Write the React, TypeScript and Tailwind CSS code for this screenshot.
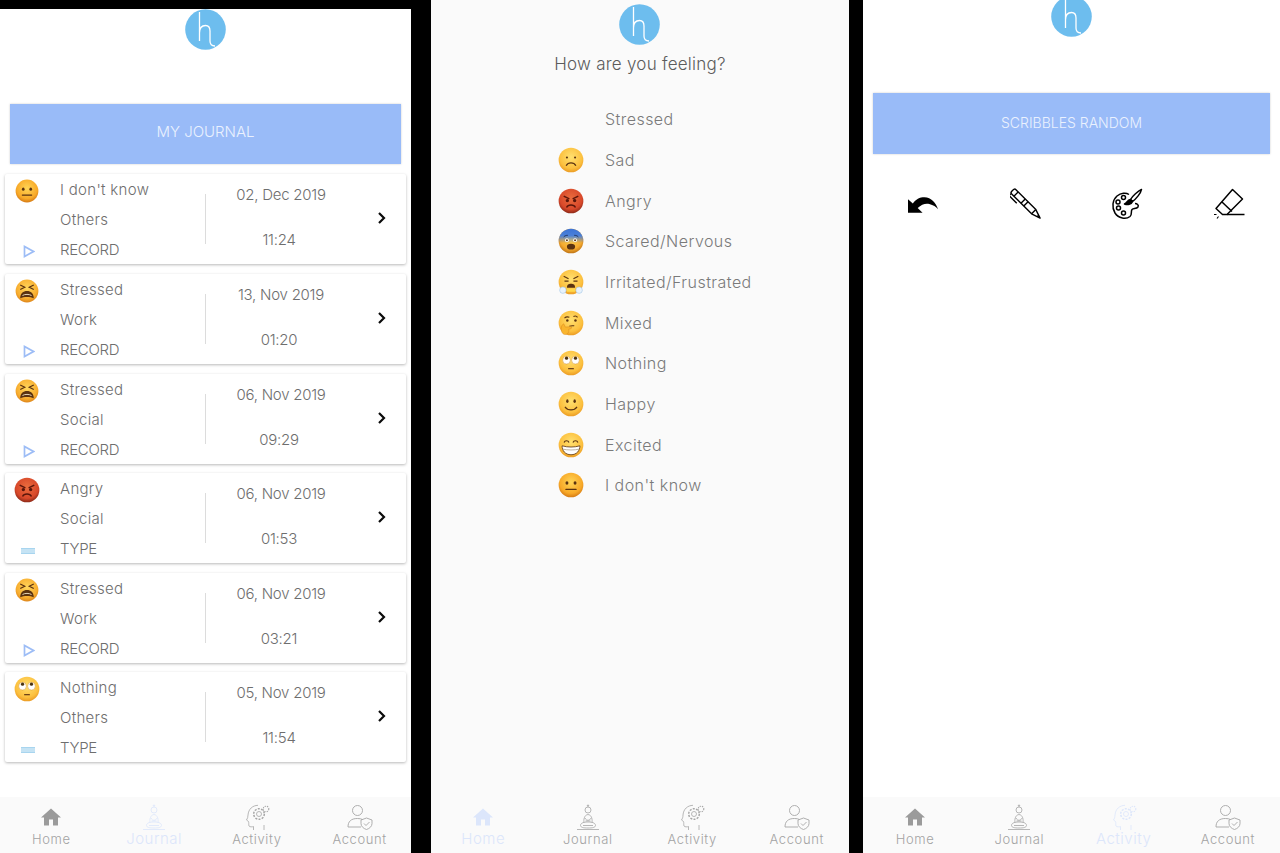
import { useId } from "react";

type Kind = "neutral" | "tired" | "angry" | "roll" | "sad" | "scared" | "steam" | "think" | "smile" | "grin";

function Face({ kind, size = 26 }: { kind: Kind; size?: number }) {
  const id = useId();
  const fills: Record<string, [string, string, string]> = {
    angry: ["#ea6d3e", "#d8482a", "#7e2314"],
    def: ["#ffe070", "#fcc03e", "#e8951f"],
    tired: ["#ffd65c", "#f8ae30", "#d97f16"],
    neutral: ["#ffd556", "#f8a928", "#cf7210"],
    scared: ["#ffd556", "#f4a92f", "#b56a10"],
  };
  const c = fills[kind] ?? fills.def;
  const ink = "#5a3210";
  return (
    <svg width={size} height={size} viewBox="0 0 32 32" className="shrink-0">
      <defs>
        <radialGradient id={id + "g"} cx="50%" cy="38%" r="65%">
          <stop offset="0%" stopColor={c[0]} />
          <stop offset="70%" stopColor={c[1]} />
          <stop offset="100%" stopColor={c[2]} />
        </radialGradient>
        <linearGradient id={id + "b"} x1="0" y1="0" x2="0" y2="1">
          <stop offset="0%" stopColor="#3b73d6" />
          <stop offset="28%" stopColor="#4a80d8" />
          <stop offset="58%" stopColor="#4a80d8" stopOpacity="0" />
        </linearGradient>
      </defs>
      <circle cx="16" cy="16" r="15.2" fill={`url(#${id}g)`} />
      {kind === "scared" && <circle cx="16" cy="16" r="15.2" fill={`url(#${id}b)`} />}
      {kind === "neutral" && (
        <g fill={ink}>
          <ellipse cx="11" cy="13.5" rx="1.8" ry="2.2" />
          <ellipse cx="21" cy="13.5" rx="1.8" ry="2.2" />
          <rect x="9" y="20.5" width="14" height="1.7" rx=".8" />
        </g>
      )}
      {kind === "tired" && (
        <g>
          <path d="M7 8l6 3-6 3M25 8l-6 3 6 3" fill="none" stroke={ink} strokeWidth="1.6" />
          <path d="M7 25.500c0-6.500 4-9.500 9-9.500s9 3 9 9.500c-5-2-13-2-18 0z" fill={ink} />
          <path d="M10 22c3-2 9-2 12 0" stroke="#f4e6c8" strokeWidth="1.2" fill="none" />
        </g>
      )}
      {kind === "angry" && (
        <g fill="none" stroke="#5b160b" strokeWidth="1.8">
          <path d="M7 10l7 3.5M25 10l-7 3.5" />
          <circle cx="11.5" cy="15.5" r="1.2" fill="#5b160b" />
          <circle cx="20.5" cy="15.5" r="1.2" fill="#5b160b" />
          <path d="M10.5 24c2-4 9-4 11 0" />
        </g>
      )}
      {kind === "roll" && (
        <g>
          <circle cx="10.5" cy="12.5" r="4.8" fill="#fff" stroke="#d18b24" strokeWidth=".6" />
          <circle cx="21.5" cy="12.5" r="4.8" fill="#fff" stroke="#d18b24" strokeWidth=".6" />
          <circle cx="10.5" cy="10" r="2" fill="#4a3210" />
          <circle cx="21.5" cy="10" r="2" fill="#4a3210" />
          <path d="M12.5 23h7" stroke={ink} strokeWidth="1.4" />
        </g>
      )}
      {kind === "sad" && (
        <g>
          <circle cx="11" cy="13" r="1.3" fill={ink} />
          <circle cx="21" cy="13" r="1.3" fill={ink} />
          <path d="M10 23c2.500-4.500 9.500-4.500 12 0" stroke={ink} strokeWidth="1.5" fill="none" />
        </g>
      )}
      {kind === "scared" && (
        <g>
          <path d="M7 11c1.500-1.500 3-2 5-2M25 11c-1.500-1.500-3-2-5-2" stroke="#1e2c50" strokeWidth="1.2" fill="none" />
          <circle cx="11" cy="15" r="2.300" fill="#fff" />
          <circle cx="21" cy="15" r="2.300" fill="#fff" />
          <circle cx="11" cy="15" r="1.200" fill={ink} />
          <circle cx="21" cy="15" r="1.200" fill={ink} />
          <ellipse cx="16" cy="23" rx="5" ry="3.500" fill={ink} />
        </g>
      )}
      {kind === "steam" && (
        <g>
          <path d="M7 9l6 3M25 9l-6 3M8 15h5M24 15h-5" stroke={ink} strokeWidth="1.400" fill="none" />
          <path d="M11 23c0-4 2-5 5-5s5 1 5 5z" fill={ink} />
          <circle cx="6" cy="26" r="4" fill="#e8f2fb" stroke="#9fc4e6" strokeWidth=".7" />
          <circle cx="26" cy="26" r="4" fill="#e8f2fb" stroke="#9fc4e6" strokeWidth=".7" />
          <path d="M11 24h10v4H11z" fill="#ffd84a" />
        </g>
      )}
      {kind === "think" && (
        <g>
          <path d="M8 10c1.500-1.500 3.500-2 6-1M19 8c2-1 4-.5 5 1" stroke={ink} strokeWidth="1.400" fill="none" />
          <circle cx="11.500" cy="13" r="1.500" fill={ink} />
          <circle cx="21.500" cy="13" r="1.500" fill={ink} />
          <path d="M14 20c2-.8 4-.8 6-.5" stroke={ink} strokeWidth="1.300" fill="none" />
          <path d="M4 23c0-3 1-5 3-6l2 4 7-.5c1 .5 1 2 0 2.500l-3 .7c1 2 0 6-4 6.500-3 .2-5-3-5-7z" fill="#f9b52e" stroke="#d8871a" strokeWidth=".6" />
        </g>
      )}
      {kind === "smile" && (
        <g>
          <ellipse cx="11.500" cy="12.500" rx="1.500" ry="2.200" fill={ink} />
          <ellipse cx="20.500" cy="12.500" rx="1.500" ry="2.200" fill={ink} />
          <path d="M8.500 19.500c3.500 5 11.500 5 15 0" stroke={ink} strokeWidth="1.300" fill="none" />
        </g>
      )}
      {kind === "grin" && (
        <g>
          <path d="M7.500 13c1-3 5-3 6 0M18.500 13c1-3 5-3 6 0" stroke={ink} strokeWidth="1.500" fill="none" />
          <path d="M5 17c7 2 15 2 22 0 0 6-4 11-11 11S5 23 5 17z" fill="#fff" stroke={ink} strokeWidth="1" />
          <path d="M5.500 21c6 1.500 15 1.500 21 0" stroke="#9a8a72" strokeWidth=".8" fill="none" />
        </g>
      )}
    </svg>
  );
}

function Logo() {
  return (
    <svg width="41" height="41" viewBox="0 0 41 41" className="block">
      <circle cx="20.500" cy="20.500" r="20.300" fill="#6dbdee" />
      <path d="M14.500 3v29M14.500 24c0-5 2.500-7.500 6-7.500 3 0 4.500 2.500 4.500 5.500v10c0 3 2 5 5 5" fill="none" stroke="#fff" strokeWidth="1.300" />
    </svg>
  );
}

function Chevron() {
  return (
    <svg width="10" height="14" viewBox="0 0 10 14">
      <path d="M2 2l5 5-5 5" fill="none" stroke="#0b0b0b" strokeWidth="2.200" />
    </svg>
  );
}

function Play() {
  return (
    <svg width="12" height="13" viewBox="0 0 12 13">
      <path d="M1.500 1.500v10l9-5z" fill="none" stroke="#9dbdf6" strokeWidth="1.700" />
    </svg>
  );
}

function TypeIcon() {
  return (
    <svg width="14" height="6" viewBox="0 0 14 6">
      <path d="M0 .8h14M0 3h14M0 5.200h14" stroke="#8cc8ea" strokeWidth="1.200" />
    </svg>
  );
}

function HomeIcon({ color }: { color: string }) {
  return (
    <svg width="24" height="24" viewBox="0 0 24 24" fill={color}>
      <path d="M10 20.500v-6h4v6h5v-8h3L12 3.500 2 12.500h3v8z" />
    </svg>
  );
}

function BuddhaIcon({ color }: { color: string }) {
  return (
    <svg width="28" height="28" viewBox="0 0 28 28" fill="none" stroke={color} strokeWidth=".8">
      <circle cx="14" cy="7" r="3" />
      <path d="M14 1.500v2.500M12.800 2.700h2.400" />
      <path d="M10 20c-.5-3 0-8 4-8.500 4 .5 4.500 5.500 4 8.500" />
      <path d="M11 15c1 3 5 3 6 0M11.500 18h5" />
      <path d="M6.500 22.500c0-2 2-3.500 7.500-3.500s7.500 1.500 7.500 3.500c-.2 2-3 2.500-7.500 2.500s-7.300-.5-7.500-2.500z" />
      <path d="M3 26.500h22M9 22.500h10" />
    </svg>
  );
}

function HeadIcon({ color }: { color: string }) {
  return (
    <svg width="28" height="28" viewBox="0 0 28 28" fill="none" stroke={color} strokeWidth=".8">
      <path d="M10.500 27v-3.500c-1 .5-4 .6-4.500-.5-.5-1.500 0-3.500-.5-4.500L3.500 17c1-1.500 1.500-3 1.500-5C5.500 6 9.500 2.500 15 2.300" />
      <path d="M21 27v-5" />
      <circle cx="16" cy="11" r="2.500" />
      <circle cx="16" cy="11" r="5.300" strokeDasharray="2 1.300" strokeWidth="1.500" />
      <circle cx="23" cy="6" r="2.800" strokeDasharray="1.300 1" strokeWidth="1.100" />
    </svg>
  );
}

function AccountIcon({ color }: { color: string }) {
  return (
    <svg width="28" height="28" viewBox="0 0 28 28" fill="none" stroke={color} strokeWidth=".9">
      <circle cx="11.500" cy="7.500" r="5" />
      <path d="M2 24c0-5.500 3-8.500 9.500-8.500 2 0 3.500.3 5 1M2 24h13" />
      <path d="M20.500 15l5.500 2v3.500c0 3-2.500 5-5.500 6-3-1-5.500-3-5.500-6V17z" />
      <path d="M18 20.500l2 2 3.500-3.500" />
    </svg>
  );
}

function Nav({ active }: { active: string }) {
  const on = "#dce6fb";
  const off = "#a6a6a6";
  const items = [
    { n: "Home", I: HomeIcon },
    { n: "Journal", I: BuddhaIcon },
    { n: "Activity", I: HeadIcon },
    { n: "Account", I: AccountIcon },
  ];
  return (
    <div className="mt-auto h-[56px] bg-[#fafafa] flex pt-[6px]">
      {items.map(({ n, I }) => {
        const a = n === active;
        return (
          <div key={n} className="flex-1 flex flex-col items-center">
            <div className="h-[28px] flex items-center justify-center">
              <I color={a ? on : n === "Home" ? "#9b9b9b" : off} />
            </div>
            <div
              className={
                a
                  ? "mt-[-2px] text-[15px] leading-[20px] tracking-[0.5px] text-[#dce6fb]"
                  : "mt-[-2px] text-[13px] leading-[20px] tracking-[0.6px] text-[#a3a3a3]"
              }
            >
              {n}
            </div>
          </div>
        );
      })}
    </div>
  );
}

const entries: { f: Kind; a: string; b: string; t: string; d: string; h: string; fs: number }[] = [
  { f: "neutral", a: "I don't know", b: "Others", t: "RECORD", d: "02, Dec 2019", h: "11:24", fs: 24 },
  { f: "tired", a: "Stressed", b: "Work", t: "RECORD", d: "13, Nov 2019", h: "01:20", fs: 24 },
  { f: "tired", a: "Stressed", b: "Social", t: "RECORD", d: "06, Nov 2019", h: "09:29", fs: 24 },
  { f: "angry", a: "Angry", b: "Social", t: "TYPE", d: "06, Nov 2019", h: "01:53", fs: 26 },
  { f: "tired", a: "Stressed", b: "Work", t: "RECORD", d: "06, Nov 2019", h: "03:21", fs: 24 },
  { f: "roll", a: "Nothing", b: "Others", t: "TYPE", d: "05, Nov 2019", h: "11:54", fs: 26 },
];

const feelings: { f: Kind | null; n: string }[] = [
  { f: null, n: "Stressed" },
  { f: "sad", n: "Sad" },
  { f: "angry", n: "Angry" },
  { f: "scared", n: "Scared/Nervous" },
  { f: "steam", n: "Irritated/Frustrated" },
  { f: "think", n: "Mixed" },
  { f: "roll", n: "Nothing" },
  { f: "smile", n: "Happy" },
  { f: "grin", n: "Excited" },
  { f: "neutral", n: "I don't know" },
];

function Banner({ text, cls }: { text: string; cls: string }) {
  return (
    <div className={"bg-[#99bbf8] flex items-center justify-center pb-[3px] text-[#eaf1fe] shadow-[0_0_2px_rgba(0,0,0,0.2)] " + cls}>
      {text}
    </div>
  );
}

function Undo() {
  return (
    <svg width="31" height="18" viewBox="0 0 32 18" fill="#000" className="ml-[1px] mt-[1px]">
      <path d="M0 3v14h15l-5-5c4-3.500 8-5 12-4 4 1 7 3 9 5.500C29 7 24 1 17 1 12 1 8 3 5 7.500z" />
    </svg>
  );
}

function Pen() {
  return (
    <svg width="32" height="32" viewBox="0 0 32 32" fill="none" stroke="#000" strokeWidth="1.400" strokeLinejoin="round" className="ml-[1px]">
      <g transform="translate(2.500 2.500) rotate(45)">
        <path d="M1.500-3H30l9 3-9 3H1.500C0 3 0 1.500 0 0s0-3 1.500-3z" />
        <path d="M5-3V3M15-3V3M19-3V3M30-3V3M36-1V1" />
        <path d="M1 3.500V6h11" />
      </g>
    </svg>
  );
}

function Palette() {
  return (
    <svg width="32" height="32" viewBox="0 0 32 32" fill="none" stroke="#000" strokeWidth="1.500" strokeLinejoin="round">
      <path d="M18 6.500C15 4.500 10 4.800 6 8 1.500 12 .5 19 4 25c3.500 5.500 11 6.500 15 3.500 2.500-2 .5-5 2-7 1.500-1.300 4.500-.5 6-2.500 1-2-1-3.500-3-3.500" />
      <path d="M30.500 1.500c-3.500 1.500-9 6.500-11 10l2 2c3.500-2.500 8.500-8.500 9-12z" />
      <path d="M19.500 11.500c-3 .5-3.500 3-6 4.500 3 1 7 .5 8-2.500z" fill="#000" />
      <circle cx="12.500" cy="9.500" r="2" />
      <circle cx="7" cy="14" r="2" />
      <circle cx="7.500" cy="20" r="2" />
      <circle cx="12.500" cy="25" r="2" />
    </svg>
  );
}

function Eraser() {
  return (
    <svg width="32" height="32" viewBox="0 0 32 32" fill="none" stroke="#000" strokeWidth="1.500" strokeLinejoin="round">
      <path d="M19.500 1.500L29.500 11 14 26.500H9.500L3 20.500z" />
      <path d="M9 14l10 9.500" />
      <path d="M14 26.500h17.500" />
      <path d="M1 26.500h2.500M5.500 28.500L4 30.500" strokeWidth="1.100" />
    </svg>
  );
}

export default function App() {
  return (
    <div
      className="h-[853px] w-[1280px] bg-black flex overflow-hidden font-light text-[#6e6e6e]"
      style={{ fontFamily: "Inter, 'Noto Sans', sans-serif" }}
    >
      {/* Journal */}
      <div className="w-[411px] mt-[9px] bg-white flex flex-col overflow-hidden">
        <div className="flex justify-center">
          <Logo />
        </div>
        <Banner text="MY JOURNAL" cls="h-[60px] mx-[10px] mt-[54px] text-[15px]" />
        <div className="mt-[10.4px] mx-[5px] flex flex-col gap-[9.6px]">
          {entries.map((e, i) => (
            <div key={i} className="h-[90px] bg-white rounded-[2px] shadow-[0_1px_3px_rgba(0,0,0,0.28)] flex">
              <div className="w-[55px] flex flex-col items-center relative">
                <div className="mt-[4px] h-[26px] ml-[-12px] flex items-center">
                  <Face kind={e.f} size={e.fs} />
                </div>
                <div className={e.t === "TYPE" ? "absolute bottom-[6px] left-[16px] h-[13px] flex items-center" : "absolute bottom-[6px] left-[18px] h-[13px] flex items-center"}>
                  {e.t === "TYPE" ? <TypeIcon /> : <Play />}
                </div>
              </div>
              <div className="w-[145px] pt-[1px] text-[15px] leading-[30px]">
                <div className="tracking-[0.3px]">{e.a}</div>
                <div className="tracking-[0.3px]">{e.b}</div>
                <div className="tracking-[-0.3px]">{e.t}</div>
              </div>
              <div className="w-px h-[50px] mt-[20px] bg-[#dcdcdc]" />
              <div className="w-[150px] pt-[6px] text-[15px] flex flex-col items-center tracking-[-0.25px]">
                <div className="leading-[30px]">{e.d}</div>
                <div className="leading-[30px] mt-[15px] mr-[4px]">{e.h}</div>
              </div>
              <div className="pl-[21px] pt-[37px]">
                <Chevron />
              </div>
            </div>
          ))}
        </div>
        <Nav active="Journal" />
      </div>

      {/* Feeling */}
      <div className="w-[418px] ml-[20px] bg-[#fafafa] flex flex-col overflow-hidden">
        <div className="flex justify-center mt-[4px] ml-[-1px]">
          <Logo />
        </div>
        <div className="text-center text-[17px] leading-[24px] mt-[7px] tracking-[0.25px] text-[#5c5c5c]">How are you feeling?</div>
        <div className="mt-[23px] ml-[127px] flex flex-col">
          {feelings.map((f) => (
            <div key={f.n} className="h-[40.67px] flex items-center text-[16px] tracking-[0.45px] text-[#7a7a7a]">
              <div className="w-[47px] flex">{f.f && <Face kind={f.f} size={26} />}</div>
              <span>{f.n}</span>
            </div>
          ))}
        </div>
        <Nav active="Home" />
      </div>

      {/* Scribbles */}
      <div className="w-[417px] ml-[14px] bg-white flex flex-col overflow-hidden">
        <div className="flex justify-center mt-[-4px]">
          <Logo />
        </div>
        <Banner text="SCRIBBLES RANDOM" cls="h-[61px] mx-[10px] mt-[56px] text-[14px]" />
        <div className="ml-[9px] mt-[34px] grid grid-cols-4">
          {[<Undo key="u" />, <Pen key="p" />, <Palette key="c" />, <Eraser key="e" />].map((ic, i) => (
            <div key={i} className="h-[32px] flex items-center justify-center">
              {ic}
            </div>
          ))}
        </div>
        <Nav active="Activity" />
      </div>
    </div>
  );
}
